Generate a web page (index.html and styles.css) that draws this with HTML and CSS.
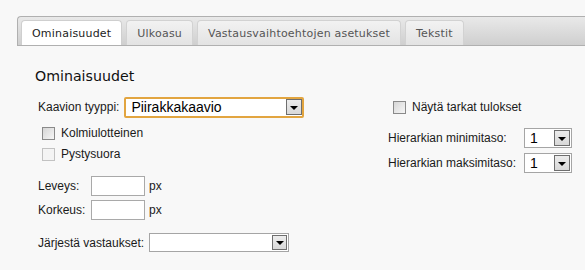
FILE: index.html
```html
<!DOCTYPE html>
<html lang="fi">
<head>
    <meta charset="UTF-8">
    <title>Kaavion asetukset</title>
    <link rel="stylesheet" href="styles.css">
</head>
<body>
    <div class="tabs">
        <div class="tab active">Ominaisuudet</div>
        <div class="tab">Ulkoasu</div>
        <div class="tab">Vastausvaihtoehtojen asetukset</div>
        <div class="tab">Tekstit</div>
    </div>
    <div class="panel">
        <h2>Ominaisuudet</h2>
        <div class="columns">
            <div class="col-left">
                <div class="row row-type">
                    <span class="label">Kaavion tyyppi:</span>
                    <div class="select select-focus select-type">
                        <span class="value">Piirakkakaavio</span>
                        <span class="arrow"></span>
                    </div>
                </div>
                <div class="row check-row first-check">
                    <span class="checkbox"></span>
                    <span>Kolmiulotteinen</span>
                </div>
                <div class="row check-row second-check">
                    <span class="checkbox disabled"></span>
                    <span>Pystysuora</span>
                </div>
                <div class="row size-row width-row">
                    <span class="label size-label">Leveys:</span>
                    <span class="text-input"></span>
                    <span class="unit">px</span>
                </div>
                <div class="row size-row height-row">
                    <span class="label size-label">Korkeus:</span>
                    <span class="text-input"></span>
                    <span class="unit">px</span>
                </div>
                <div class="row order-row">
                    <span class="label">Järjestä vastaukset:</span>
                    <div class="select select-order">
                        <span class="value"></span>
                        <span class="arrow"></span>
                    </div>
                </div>
            </div>
            <div class="col-right">
                <div class="row check-row exact-row">
                    <span class="checkbox"></span>
                    <span>Näytä tarkat tulokset</span>
                </div>
                <div class="row level-row min-row">
                    <span class="label level-label">Hierarkian minimitaso:</span>
                    <div class="select select-level">
                        <span class="value">1</span>
                        <span class="arrow"></span>
                    </div>
                </div>
                <div class="row level-row max-row">
                    <span class="label level-label">Hierarkian maksimitaso:</span>
                    <div class="select select-level">
                        <span class="value">1</span>
                        <span class="arrow"></span>
                    </div>
                </div>
            </div>
        </div>
    </div>
</body>
</html>
```

FILE: styles.css
```css
body {
    margin: 0;
    background-color: #f8f8f8;
    font-family: "Liberation Sans", Arial, sans-serif;
    font-size: 12px;
    color: #1a1a1a;
}
.tabs {
    display: flex;
    align-items: flex-end;
    gap: 4px;
    margin: 16px 0 0 17px;
    height: 28px;
    padding-left: 3px;
    border: 1px solid #b0b0b0;
    border-right: none;
    border-top-left-radius: 4px;
    background: linear-gradient(#e9e9e9, #cfcfcf);
}
.tab {
    height: 24px;
    line-height: 25px;
    padding: 0 10px;
    font-family: "DejaVu Sans", Verdana, sans-serif;
    font-size: 11px;
    letter-spacing: 0.2px;
    color: #555;
    border: 1px solid #d2d2d2;
    border-bottom: none;
    border-radius: 4px 4px 0 0;
    background: linear-gradient(#f2f2f2, #e3e3e3);
}
.tab.active {
    color: #222;
    background: #fff;
    border-color: #cfcfcf;
}
.panel {
    padding: 20px 0 0 35px;
}
h2 {
    margin: 0;
    height: 20px;
    line-height: 20px;
    font-family: "DejaVu Sans", Verdana, sans-serif;
    font-size: 14.2px;
    font-weight: normal;
    color: #111;
}
.columns {
    display: flex;
    margin-top: 10px;
}
.col-left {
    width: 353px;
}
.row {
    display: flex;
    align-items: center;
}
.label {
    padding-left: 3px;
}
.row-type {
    height: 22px;
}
.row-type .label {
    margin-right: 5px;
}
.check-row {
    height: 20px;
    padding-left: 7px;
}
.checkbox {
    width: 11px;
    height: 11px;
    margin-right: 6px;
    border: 1px solid #8a8a8a;
    background: linear-gradient(135deg, #d6d6d6, #f6f6f6);
}
.checkbox.disabled {
    border-color: #c2c2c2;
    background: #f4f4f4;
}
.first-check {
    margin-top: 5px;
}
.second-check {
    margin-top: 1px;
}
.size-row {
    height: 20px;
}
.width-row {
    margin-top: 12px;
}
.height-row {
    margin-top: 4px;
}
.size-label {
    width: 53px;
}
.text-input {
    width: 52px;
    height: 18px;
    border: 1px solid #a9a9a9;
    background: #fff;
}
.unit {
    margin-left: 4px;
}
.order-row {
    height: 19px;
    margin-top: 13px;
}
.order-row .label {
    margin-right: 5px;
}
.select {
    display: flex;
    align-items: center;
    box-sizing: border-box;
    border: 1px solid #a5a5a5;
    background: #fff;
    padding: 1px;
}
.select .value {
    flex: 1;
    padding-left: 4px;
    font-size: 14px;
    color: #000;
}
.select .arrow {
    position: relative;
    box-sizing: border-box;
    width: 16px;
    height: 16px;
    border: 1px solid #6e6e6e;
    background: linear-gradient(#ececec, #d8d8d8);
}
.select .arrow::after {
    content: "";
    position: absolute;
    left: 3px;
    top: 6px;
    border-left: 4px solid transparent;
    border-right: 4px solid transparent;
    border-top: 4px solid #000;
}
.select-focus {
    border: 2px solid #e2a540;
    border-radius: 2px;
    padding: 0 0 0 1px;
}
.select-type {
    width: 180px;
    height: 21px;
}
.select-order {
    width: 140px;
    height: 19px;
}
.select-order .arrow {
    width: 15px;
    height: 15px;
}
.select-order .arrow::after {
    left: 3px;
    top: 5px;
}
.col-right .check-row {
    height: 22px;
    padding-left: 5px;
}
.level-row {
    height: 20px;
}
.min-row {
    margin-top: 10px;
}
.max-row {
    margin-top: 5px;
}
.level-label {
    width: 136px;
    padding-left: 0;
}
.select-level {
    width: 48px;
    height: 20px;
}
.select-level .value {
    padding-left: 4px;
}
```
